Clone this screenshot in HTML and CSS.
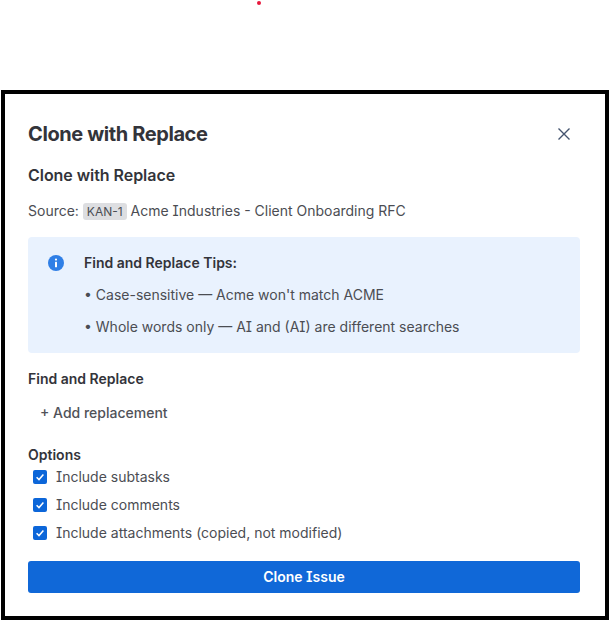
FILE: index.html
```html
<!DOCTYPE html>
<html>
<head>
    <title>Clone with Replace</title>
    <link rel="stylesheet" href="styles.css">
</head>
<body>
    <span class="dot"></span>
    <div class="modal">
        <div class="modal-header">
            <h1>Clone with Replace</h1>
            <button class="close" aria-label="Close">
                <svg width="16" height="16" viewBox="0 0 16 16"><path d="M2.5 2.5l11 11M13.5 2.5l-11 11" stroke="#44546f" stroke-width="1.4" fill="none"/></svg>
            </button>
        </div>
        <h2>Clone with Replace</h2>
        <p class="source">Source: <span class="key">KAN-1</span> Acme Industries - Client Onboarding RFC</p>
        <div class="tips">
            <svg class="tips-icon" width="16" height="16" viewBox="0 0 16 16">
                <circle cx="8" cy="8" r="8" fill="#2f7fe6"/>
                <circle cx="8" cy="4.6" r="1.1" fill="#fff"/>
                <rect x="7" y="6.8" width="2" height="5.4" rx="0.5" fill="#fff"/>
            </svg>
            <div class="tips-body">
                <div class="tips-title">Find and Replace Tips:</div>
                <div class="tip">• Case-sensitive — Acme won't match ACME</div>
                <div class="tip">• Whole words only — AI and (AI) are different searches</div>
            </div>
        </div>
        <div class="label find-label">Find and Replace</div>
        <button class="add">+ Add replacement</button>
        <div class="label options-label">Options</div>
        <label class="check"><span class="box"><svg width="10" height="10" viewBox="0 0 10 10"><path d="M1.6 5.2l2.4 2.4 4.4-5" stroke="#fff" stroke-width="1.5" fill="none"/></svg></span>Include subtasks</label>
        <label class="check"><span class="box"><svg width="10" height="10" viewBox="0 0 10 10"><path d="M1.6 5.2l2.4 2.4 4.4-5" stroke="#fff" stroke-width="1.5" fill="none"/></svg></span>Include comments</label>
        <label class="check"><span class="box"><svg width="10" height="10" viewBox="0 0 10 10"><path d="M1.6 5.2l2.4 2.4 4.4-5" stroke="#fff" stroke-width="1.5" fill="none"/></svg></span>Include attachments (copied, not modified)</label>
        <button class="submit">Clone Issue</button>
    </div>
</body>
</html>
```
FILE: styles.css
```css
body {
    margin: 0;
    padding: 90px 0 0 1px;
    background-color: #fff;
    color: #4b4d53;
    font-family: Inter, "Liberation Sans", sans-serif;
    font-size: 14px;
    font-feature-settings: "cv08";
}

.dot {
    position: absolute;
    left: 257px;
    top: 1px;
    width: 4px;
    height: 4px;
    border-radius: 50%;
    background-color: #e8173c;
}

.modal {
    box-sizing: border-box;
    width: 608px;
    height: 530px;
    padding: 28px 25px 0 23px;
    border: 4px solid #000;
    background-color: #fff;
}

.modal-header {
    display: flex;
    justify-content: space-between;
    align-items: center;
    height: 24px;
}

h1 {
    margin: 0;
    font-size: 20px;
    line-height: 24px;
    font-weight: 650;
    letter-spacing: -0.4px;
    color: #33343a;
}

.close {
    display: flex;
    margin-right: 8px;
    padding: 0;
    border: 0;
    background: none;
}

h2 {
    margin: 19px 0 0;
    font-size: 16px;
    line-height: 20px;
    font-weight: 600;
    letter-spacing: -0.05px;
    color: #33343a;
}

.source {
    margin: 16px 0 0;
    line-height: 20px;
}

.key {
    padding: 1px 4px;
    border-radius: 3px;
    background-color: #dddee1;
    font-size: 12px;
}

.tips {
    display: flex;
    gap: 20px;
    height: 116px;
    box-sizing: border-box;
    margin-top: 15px;
    padding: 18px 20px;
    border-radius: 4px;
    background-color: #e9f2fe;
}

.tips-title {
    font-weight: 600;
    line-height: 16px;
    color: #33343a;
}

.tip {
    margin-top: 12px;
    line-height: 20px;
}

.tips-title + .tip {
    margin-top: 14px;
}

.label {
    font-weight: 600;
    line-height: 20px;
    color: #33343a;
}

.find-label {
    margin-top: 16px;
}

.add {
    display: block;
    margin-top: 7px;
    height: 32px;
    padding: 0 12px;
    border: 0;
    background: none;
    color: #505258;
    font: inherit;
    font-weight: 500;
}

.options-label {
    margin-top: 17px;
}

.check {
    display: flex;
    align-items: center;
    gap: 9px;
    height: 20px;
    margin: 0 0 8px 5px;
}

.options-label + .check {
    margin-top: 1px;
}

.box {
    display: flex;
    align-items: center;
    justify-content: center;
    width: 14px;
    height: 14px;
    margin-top: 1px;
    border-radius: 2px;
    background-color: #0c66d9;
}

.submit {
    display: block;
    width: 100%;
    height: 32px;
    margin-top: 19px;
    padding: 0 0 2px;
    border: 0;
    border-radius: 3px;
    background-color: #1068d8;
    color: #fff;
    font: inherit;
    font-weight: 600;
}
```
